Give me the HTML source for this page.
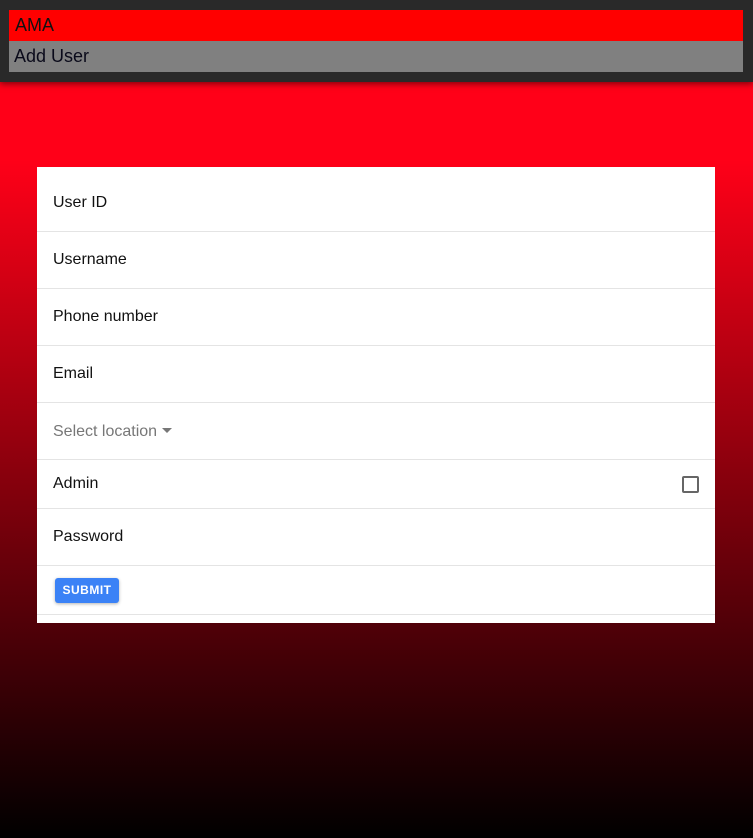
<!DOCTYPE html>
<html><head><style>
*{box-sizing:border-box;margin:0;padding:0}
html,body{width:753px;height:838px;overflow:hidden}
body{font-family:"Liberation Sans",Arial,sans-serif;background:linear-gradient(to bottom,#ff0018 0px,#ff0018 160px,#000 838px);position:relative}
.hdr{position:absolute;left:0;top:0;width:753px;height:82px;background:#292929;box-shadow:0 2px 6px rgba(0,0,0,.5)}
.b1{position:absolute;left:9px;top:10px;width:734px;height:31px;background:#ff0000;font-size:18px;line-height:31px;padding-left:6px;color:#111}
.b2{position:absolute;left:9px;top:41px;width:734px;height:31px;background:#808080;font-size:18px;line-height:31px;padding-left:5px;color:#0a0a1a}
.card{position:absolute;left:37px;top:167px;width:678px;height:456px;background:#fff}
.row{position:absolute;left:0;width:678px;border-bottom:1px solid #e4e4e4;font-size:16px;color:#111;padding-left:16px}
.sel{color:#777}
.tri{display:inline-block;width:0;height:0;border-left:5px solid transparent;border-right:5px solid transparent;border-top:5px solid #777;vertical-align:middle;margin-left:5px;margin-top:-2px}
.cb{position:absolute;right:16px;top:16px;width:17px;height:17px;border:2px solid #666;border-radius:2px}
.btn{position:absolute;left:18px;top:12px;width:64px;height:25px;background:#3b82f6;border-radius:3px;color:#fff;font-size:12px;font-weight:bold;text-align:center;line-height:25px;letter-spacing:.5px;box-shadow:0 1px 3px rgba(0,0,0,.3)}
</style></head><body>
<div class="hdr"><div class="b1">AMA</div><div class="b2">Add User</div></div>
<div class="card">
<div class="row" style="top:0;height:65px;line-height:72px">User ID</div>
<div class="row" style="top:65px;height:57px;line-height:56px">Username</div>
<div class="row" style="top:122px;height:57px;line-height:56px">Phone number</div>
<div class="row" style="top:179px;height:57px;line-height:56px">Email</div>
<div class="row sel" style="top:236px;height:57px;line-height:58px">Select location<span class="tri"></span></div>
<div class="row" style="top:293px;height:49px;line-height:47px">Admin<div class="cb"></div></div>
<div class="row" style="top:342px;height:57px;line-height:56px">Password</div>
<div class="row" style="top:399px;height:49px"><div class="btn">SUBMIT</div></div>
</div>
</body></html>
